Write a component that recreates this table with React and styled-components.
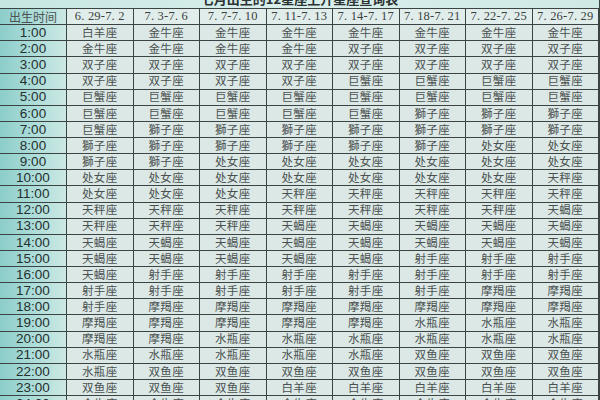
import React from "react";
import styled, { createGlobalStyle } from "styled-components";

const Global = createGlobalStyle`
  html, body { margin: 0; padding: 0; background: #eef5f4; overflow: hidden; }
  body { width: 600px; height: 400px; }
`;

const Page = styled.div`
  width: 600px;
  height: 400px;
  overflow: hidden;
  background: #eef5f4;
`;

const Sheet = styled.div`
  width: 599px;
  margin-top: -12px;
  background: #3b4443;
  padding: 0 1px 0 0;
  display: flex;
  flex-direction: column;
  gap: 1px;
`;

const TitleBar = styled.div`
  height: 20px;
  background: linear-gradient(90deg, #c6e6e2 0%, #d9efec 50%, #cfe9e5 100%);
  display: flex;
  align-items: center;
  justify-content: center;
  font-family: "Noto Sans CJK SC", sans-serif;
  font-weight: 700;
  font-size: 13px;
  color: #2c3332;
  letter-spacing: 0px;
`;

const Grid = styled.div`
  display: grid;
  grid-template-columns: 66px repeat(8, 65.5px);
  grid-auto-rows: 15.13px;
  gap: 1px;
`;

const TimeCell = styled.div`
  background: linear-gradient(90deg, #8ccdca 0%, #a9dbd7 45%, #cbe8e4 100%);
  display: flex;
  align-items: center;
  justify-content: center;
  font-family: ${(p) =>
    p.$head ? '"Noto Sans CJK SC", sans-serif' : '"Liberation Sans", Arial, sans-serif'};
  font-size: ${(p) => (p.$head ? "12px" : "13.5px")};
  color: ${(p) => (p.$head ? "#4a5352" : "#26302f")};
  line-height: 1;
`;

const HeadCell = styled.div`
  background: #e1edeb;
  display: flex;
  align-items: center;
  justify-content: center;
  font-family: "Liberation Serif", "Times New Roman", serif;
  font-size: 12.5px;
  letter-spacing: 0.2px;
  color: #3a4241;
  white-space: pre;
  line-height: 1;
`;

const Cell = styled.div`
  background: #dce8e6;
  display: flex;
  align-items: center;
  justify-content: center;
  font-family: "Noto Sans CJK SC", sans-serif;
  font-size: 11.5px;
  letter-spacing: 0.3px;
  color: #4a5150;
  line-height: 1;
`;

const headers = [
  "6. 29-7. 2",
  "7. 3-7. 6",
  "7. 7-7. 10",
  "7. 11-7. 13",
  "7. 14-7. 17",
  "7. 18-7. 21",
  "7. 22-7. 25",
  "7. 26-7. 29",
];

const rows = [
  ["1:00", "白羊 金牛 金牛 金牛 金牛 金牛 金牛 金牛"],
  ["2:00", "金牛 金牛 金牛 金牛 双子 双子 双子 双子"],
  ["3:00", "双子 双子 双子 双子 双子 双子 双子 双子"],
  ["4:00", "双子 双子 双子 双子 巨蟹 巨蟹 巨蟹 巨蟹"],
  ["5:00", "巨蟹 巨蟹 巨蟹 巨蟹 巨蟹 巨蟹 巨蟹 巨蟹"],
  ["6:00", "巨蟹 巨蟹 巨蟹 巨蟹 巨蟹 獅子 獅子 獅子"],
  ["7:00", "巨蟹 獅子 獅子 獅子 獅子 獅子 獅子 獅子"],
  ["8:00", "獅子 獅子 獅子 獅子 獅子 獅子 处女 处女"],
  ["9:00", "獅子 獅子 处女 处女 处女 处女 处女 处女"],
  ["10:00", "处女 处女 处女 处女 处女 处女 处女 天秤"],
  ["11:00", "处女 处女 处女 天秤 天秤 天秤 天秤 天秤"],
  ["12:00", "天秤 天秤 天秤 天秤 天秤 天秤 天秤 天蝎"],
  ["13:00", "天秤 天秤 天秤 天蝎 天蝎 天蝎 天蝎 天蝎"],
  ["14:00", "天蝎 天蝎 天蝎 天蝎 天蝎 天蝎 天蝎 天蝎"],
  ["15:00", "天蝎 天蝎 天蝎 天蝎 天蝎 射手 射手 射手"],
  ["16:00", "天蝎 射手 射手 射手 射手 射手 射手 射手"],
  ["17:00", "射手 射手 射手 射手 射手 射手 摩羯 摩羯"],
  ["18:00", "射手 摩羯 摩羯 摩羯 摩羯 摩羯 摩羯 摩羯"],
  ["19:00", "摩羯 摩羯 摩羯 摩羯 摩羯 水瓶 水瓶 水瓶"],
  ["20:00", "摩羯 摩羯 水瓶 水瓶 水瓶 水瓶 水瓶 水瓶"],
  ["21:00", "水瓶 水瓶 水瓶 水瓶 水瓶 双鱼 双鱼 双鱼"],
  ["22:00", "水瓶 双鱼 双鱼 双鱼 双鱼 双鱼 双鱼 双鱼"],
  ["23:00", "双鱼 双鱼 双鱼 白羊 白羊 白羊 白羊 白羊"],
  ["24:00", "金牛 金牛 金牛 金牛 金牛 金牛 金牛 金牛"],
];

export default function App() {
  return (
    <Page>
      <Global />
      <Sheet>
        <TitleBar>七月出生的12星座上升星座查询表</TitleBar>
        <Grid>
          <TimeCell $head>出生时间</TimeCell>
          {headers.map((h) => (
            <HeadCell key={h}>{h}</HeadCell>
          ))}
          {rows.map(([t, signs]) => (
            <React.Fragment key={t}>
              <TimeCell>{t}</TimeCell>
              {signs.split(" ").map((s, i) => (
                <Cell key={i}>{s}座</Cell>
              ))}
            </React.Fragment>
          ))}
        </Grid>
      </Sheet>
    </Page>
  );
}
